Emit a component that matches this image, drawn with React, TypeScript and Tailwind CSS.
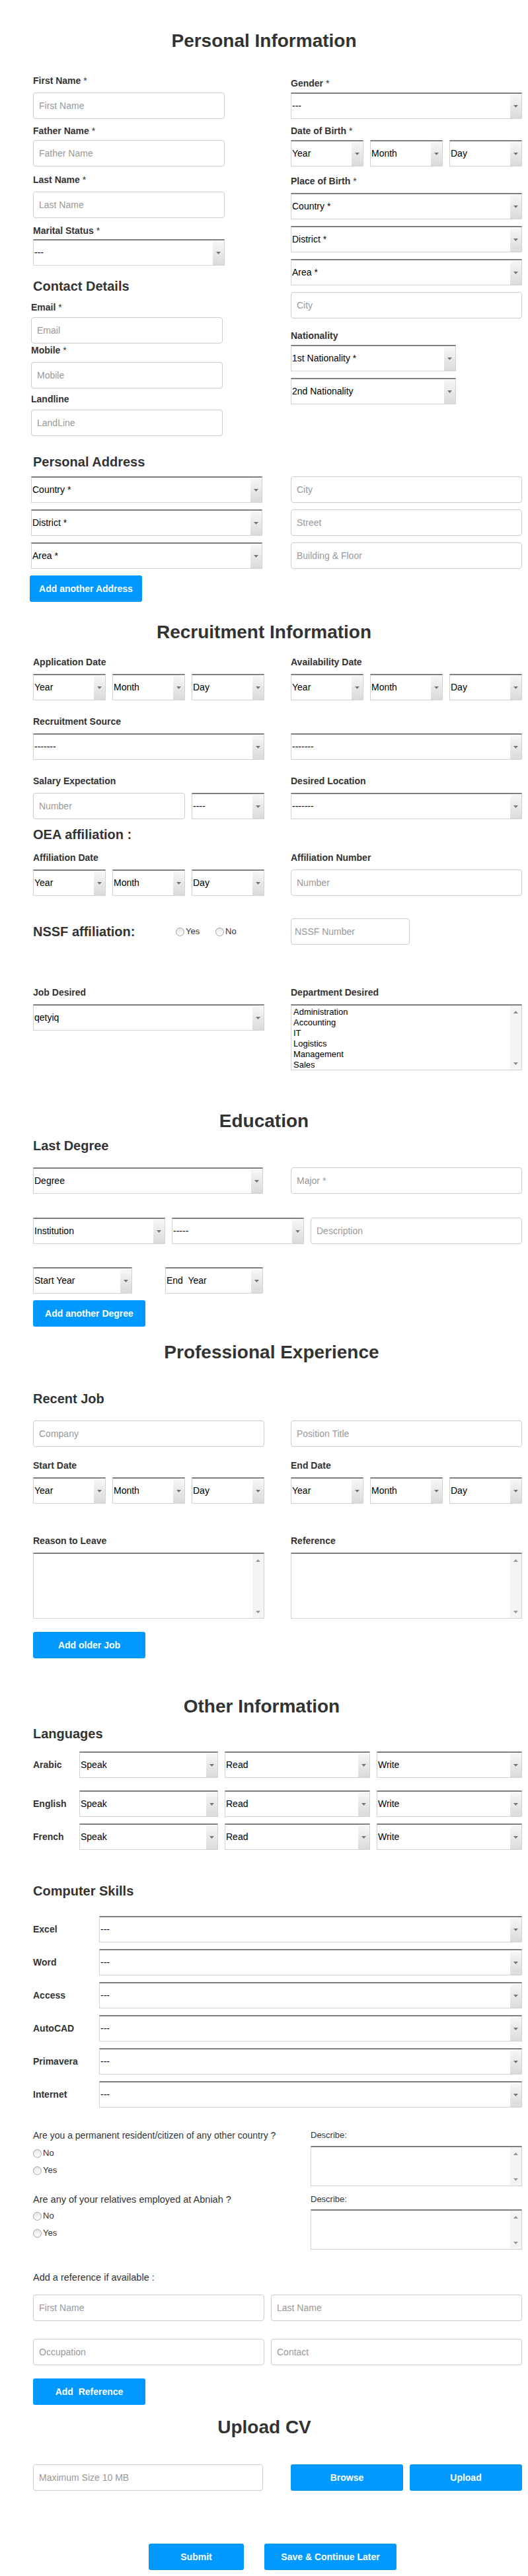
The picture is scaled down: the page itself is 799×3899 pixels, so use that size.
import React from "react";

type C = { className?: string };

function Tri({ up = false, color = "#777" }: { up?: boolean; color?: string }) {
  return (
    <svg width="7" height="4" viewBox="0 0 7 4">
      <path d={up ? "M0 4 L3.5 0 L7 4 Z" : "M0 0 L7 0 L3.5 4 Z"} fill={color} />
    </svg>
  );
}

function Title({ t, className = "" }: { t: string } & C) {
  return (
    <div className={`text-center text-[28px] leading-[32px] font-bold text-[#333] ${className}`}>{t}</div>
  );
}

function H2({ t, className = "" }: { t: string } & C) {
  return <div className={`text-[20px] leading-[24px] font-bold text-[#333] whitespace-nowrap ${className}`}>{t}</div>;
}

function Lbl({ t, req = false, className = "" }: { t: string; req?: boolean } & C) {
  return (
    <div className={`h-[16px] text-[14px] leading-[16px] font-bold text-[#333] whitespace-nowrap ${className}`}>
      {t}
      {req && <span className="font-normal"> *</span>}
    </div>
  );
}

function Inp({ ph, className = "" }: { ph: string } & C) {
  return (
    <input
      readOnly
      placeholder={ph}
      className={`block h-[40px] border border-[#cccccc] rounded-[4px] bg-white px-[8px] text-[14px] text-black placeholder:text-[#999] outline-none ${className}`}
    />
  );
}

function Sel({ v, className = "" }: { v: string } & C) {
  return (
    <div className={`h-[40px] flex bg-white border border-[#d3d3d3] border-t-2 border-t-[#7f7f7f] ${className}`}>
      <div className="flex-1 min-w-0 flex items-center pl-[1px] text-[14px] text-black whitespace-pre overflow-hidden">{v}</div>
      <div className="w-[17px] shrink-0 mt-[1px] bg-linear-to-b from-[#f7f7f7] to-[#dadada] flex items-center justify-center">
        <Tri />
      </div>
    </div>
  );
}

function TA({ className = "" }: C) {
  return (
    <div className={`flex bg-white border border-[#d3d3d3] border-t-2 border-t-[#7f7f7f] ${className}`}>
      <div className="flex-1" />
      <div className="w-[17px] bg-[#f4f4f4] flex flex-col items-center justify-between pt-[8px] pb-[7px]">
        <Tri up color="#999" />
        <Tri color="#999" />
      </div>
    </div>
  );
}

function ListBox() {
  return (
    <div className="h-[100px] flex bg-white border border-[#d3d3d3] border-t-2 border-t-[#7f7f7f]">
      <div className="flex-1 pl-[3px] pt-[2px] text-[13px] leading-[16px] text-black overflow-hidden">
        {["Administration", "Accounting", "IT", "Logistics", "Management", "Sales"].map((x) => (
          <div key={x}>{x}</div>
        ))}
      </div>
      <div className="w-[17px] bg-[#f4f4f4] flex flex-col items-center justify-between pt-[8px] pb-[7px]">
        <Tri up color="#888" />
        <Tri color="#888" />
      </div>
    </div>
  );
}

function Btn({ t, className = "" }: { t: string } & C) {
  return (
    <div
      className={`h-[40px] bg-[#0099ff] rounded-[3px] text-white text-[14px] font-bold flex items-center justify-center whitespace-pre ${className}`}
    >
      {t}
    </div>
  );
}

function Radio({ t, className = "" }: { t: string } & C) {
  return (
    <div className={`h-[16px] flex items-center gap-[2px] text-[13px] leading-[16px] text-[#333] ${className}`}>
      <span className="w-[13px] h-[13px] rounded-full border border-[#a0a0a0] bg-linear-to-b from-[#e8e8e8] to-white" />
      {t}
    </div>
  );
}

function Dates({ className = "" }: C) {
  return (
    <div className={`flex gap-[10px] ${className}`}>
      <Sel v="Year" className="flex-1 min-w-0" />
      <Sel v="Month" className="flex-1 min-w-0" />
      <Sel v="Day" className="flex-1 min-w-0" />
    </div>
  );
}

function Row2({ l, r, className = "" }: { l: React.ReactNode; r: React.ReactNode } & C) {
  return (
    <div className={`flex items-start ${className}`}>
      <div className="w-[350px]">{l}</div>
      <div className="w-[350px] ml-[40px]">{r}</div>
    </div>
  );
}

export default function App() {
  const langs = [
    ["Arabic", "mt-[15px]"],
    ["English", "mt-[19px]"],
    ["French", "mt-[10px]"],
  ];
  const skills = ["Excel", "Word", "Access", "AutoCAD", "Primavera", "Internet"];
  return (
    <div className="w-[799px] bg-white font-['Liberation_Sans',Arial,sans-serif] text-[#333] pb-[9px] overflow-hidden">
      {/* Personal Information */}
      <Title t="Personal Information" className="mt-[46px]" />
      <div className="ml-[50px] flex items-start">
        <div className="w-[290px] flex flex-col">
          <Lbl t="First Name" req className="mt-[36px]" />
          <Inp ph="First Name" className="mt-[10px] w-[290px]" />
          <Lbl t="Father Name" req className="mt-[10px]" />
          <Inp ph="Father Name" className="mt-[6px] w-[290px]" />
          <Lbl t="Last Name" req className="mt-[12px]" />
          <Inp ph="Last Name" className="mt-[10px] w-[290px]" />
          <Lbl t="Marital Status" req className="mt-[11px]" />
          <Sel v="---" className="mt-[5px] w-[290px]" />
          <H2 t="Contact Details" className="mt-[19px]" />
          <Lbl t="Email" req className="mt-[12px] -ml-[3px]" />
          <Inp ph="Email" className="mt-[7px] -ml-[3px] w-[290px]" />
          <Lbl t="Mobile" req className="mt-[2px] -ml-[3px]" />
          <Inp ph="Mobile" className="mt-[10px] -ml-[3px] w-[290px]" />
          <Lbl t="Landline" className="mt-[8px] -ml-[3px]" />
          <Inp ph="LandLine" className="mt-[8px] -ml-[3px] w-[290px]" />
        </div>
        <div className="ml-[100px] w-[350px] flex flex-col">
          <Lbl t="Gender" req className="mt-[40px]" />
          <Sel v="---" className="mt-[6px]" />
          <Lbl t="Date of Birth" req className="mt-[10px]" />
          <Dates className="mt-[6px]" />
          <Lbl t="Place of Birth" req className="mt-[14px]" />
          <Sel v="Country *" className="mt-[10px]" />
          <Sel v="District *" className="mt-[10px]" />
          <Sel v="Area *" className="mt-[10px]" />
          <Inp ph="City" className="mt-[10px] w-[350px]" />
          <Lbl t="Nationality" className="mt-[18px]" />
          <Sel v="1st Nationality *" className="mt-[6px] w-[250px]" />
          <Sel v="2nd Nationality" className="mt-[10px] w-[250px]" />
        </div>
      </div>

      {/* Personal Address */}
      <div className="ml-[50px] w-[740px]">
        <H2 t="Personal Address" className="mt-[27px]" />
        {[
          ["Country *", "City"],
          ["District *", "Street"],
          ["Area *", "Building & Floor"],
        ].map(([s, p]) => (
          <div key={s} className="flex mt-[10px]">
            <Sel v={s} className="w-[350px] -ml-[3px]" />
            <Inp ph={p} className="w-[350px] ml-[43px]" />
          </div>
        ))}
        <Btn t="Add another Address" className="mt-[10px] -ml-[5px] w-[170px]" />
      </div>

      {/* Recruitment Information */}
      <Title t="Recruitment Information" className="mt-[30px]" />
      <div className="ml-[50px] w-[740px]">
        <Row2 className="mt-[21px]" l={<Lbl t="Application Date" />} r={<Lbl t="Availability Date" />} />
        <Row2 className="mt-[10px]" l={<Dates />} r={<Dates />} />
        <Row2 className="mt-[24px]" l={<Lbl t="Recruitment Source" />} r={null} />
        <Row2 className="mt-[10px]" l={<Sel v="-------" />} r={<Sel v="-------" />} />
        <Row2 className="mt-[24px]" l={<Lbl t="Salary Expectation" />} r={<Lbl t="Desired Location" />} />
        <Row2
          className="mt-[10px]"
          l={
            <div className="flex">
              <Inp ph="Number" className="w-[230px]" />
              <Sel v="----" className="ml-[10px] flex-1" />
            </div>
          }
          r={<Sel v="-------" />}
        />
        <H2 t="OEA affiliation :" className="mt-[11px]" />
        <Row2 className="mt-[15px]" l={<Lbl t="Affiliation Date" />} r={<Lbl t="Affiliation Number" />} />
        <Row2 className="mt-[10px]" l={<Dates />} r={<Inp ph="Number" className="w-[350px]" />} />
        <div className="flex items-center mt-[34px] h-[40px]">
          <div className="w-[216px] text-[20px] leading-[24px] font-bold">NSSF affiliation:</div>
          <div className="w-[60px]">
            <Radio t="Yes" />
          </div>
          <div className="w-[114px]">
            <Radio t="No" />
          </div>
          <Inp ph="NSSF Number" className="w-[180px] !px-[5px]" />
        </div>
        <Row2 className="mt-[64px]" l={<Lbl t="Job Desired" />} r={<Lbl t="Department Desired" />} />
        <Row2 className="mt-[10px]" l={<Sel v="qetyiq" />} r={<ListBox />} />
      </div>

      {/* Education */}
      <Title t="Education" className="mt-[61px]" />
      <div className="ml-[50px] w-[740px]">
        <H2 t="Last Degree" className="mt-[9px]" />
        <div className="flex mt-[21px]">
          <Sel v="Degree" className="w-[348px]" />
          <Inp ph="Major *" className="w-[350px] ml-[42px]" />
        </div>
        <div className="flex mt-[36px]">
          <Sel v="Institution" className="w-[200px]" />
          <Sel v="-----" className="w-[200px] ml-[10px]" />
          <Inp ph="Description" className="w-[320px] ml-[10px]" />
        </div>
        <div className="flex mt-[35px]">
          <Sel v="Start Year" className="w-[150px]" />
          <Sel v="End  Year" className="w-[148px] ml-[50px]" />
        </div>
        <Btn t="Add another Degree" className="mt-[10px] w-[170px]" />
      </div>

      {/* Professional Experience */}
      <Title t="Professional Experience" className="mt-[23px] pl-[23px]" />
      <div className="ml-[50px] w-[740px]">
        <H2 t="Recent Job" className="mt-[42px]" />
        <Row2
          className="mt-[21px]"
          l={<Inp ph="Company" className="w-[350px]" />}
          r={<Inp ph="Position Title" className="w-[350px]" />}
        />
        <Row2 className="mt-[20px]" l={<Lbl t="Start Date" />} r={<Lbl t="End Date" />} />
        <Row2 className="mt-[10px]" l={<Dates />} r={<Dates />} />
        <Row2 className="mt-[48px]" l={<Lbl t="Reason to Leave" />} r={<Lbl t="Reference" />} />
        <Row2 className="mt-[10px]" l={<TA className="h-[100px]" />} r={<TA className="h-[100px]" />} />
        <Btn t="Add older Job" className="mt-[20px] w-[170px]" />
      </div>

      {/* Other Information */}
      <Title t="Other Information" className="mt-[57px] pr-[7px]" />
      <div className="ml-[50px] w-[740px]">
        <H2 t="Languages" className="mt-[13px]" />
        {langs.map(([l, m]) => (
          <div key={l} className={`flex items-center ${m}`}>
            <div className="w-[70px] text-[14px] leading-[16px] font-bold">{l}</div>
            <Sel v="Speak" className="w-[210px]" />
            <Sel v="Read" className="w-[220px] ml-[10px]" />
            <Sel v="Write" className="w-[220px] ml-[10px]" />
          </div>
        ))}
        <H2 t="Computer Skills" className="mt-[50px]" />
        {skills.map((s, i) => (
          <div key={s} className={`flex items-center ${i === 0 ? "mt-[26px]" : "mt-[10px]"}`}>
            <div className="w-[100px] text-[14px] leading-[16px] font-bold">{s}</div>
            <Sel v="---" className="w-[640px]" />
          </div>
        ))}

        <div className="flex items-start mt-[34px]">
          <div className="w-[420px]">
            <div className="text-[14px] leading-[16px] text-[#333] whitespace-nowrap">
              Are you a permanent resident/citizen of any other country ?
            </div>
            <Radio t="No" className="mt-[11px]" />
            <Radio t="Yes" className="mt-[10px]" />
          </div>
          <div className="w-[320px]">
            <div className="text-[13px] leading-[16px] text-[#333]">Describe:</div>
            <TA className="mt-[8px] h-[61px]" />
          </div>
        </div>
        <div className="flex items-start mt-[12px]">
          <div className="w-[420px]">
            <div className="text-[14.5px] leading-[16px] text-[#333] whitespace-nowrap">
              Are any of your relatives employed at Abniah ?
            </div>
            <Radio t="No" className="mt-[9px]" />
            <Radio t="Yes" className="mt-[10px]" />
          </div>
          <div className="w-[320px]">
            <div className="text-[13px] leading-[16px] text-[#333]">Describe:</div>
            <TA className="mt-[7px] h-[61px]" />
          </div>
        </div>

        <div className="mt-[34px] text-[14.5px] leading-[16px] text-[#333]">Add a reference if available :</div>
        <div className="flex mt-[18px]">
          <Inp ph="First Name" className="w-[350px]" />
          <Inp ph="Last Name" className="w-[380px] ml-[10px]" />
        </div>
        <div className="flex mt-[27px]">
          <Inp ph="Occupation" className="w-[350px]" />
          <Inp ph="Contact" className="w-[380px] ml-[10px]" />
        </div>
        <Btn t="Add  Reference" className="mt-[20px] w-[170px]" />
      </div>

      {/* Upload CV */}
      <Title t="Upload CV" className="mt-[18px] pl-[1px]" />
      <div className="ml-[50px] w-[740px]">
        <div className="flex mt-[40px]">
          <Inp ph="Maximum Size 10 MB" className="w-[348px]" />
          <Btn t="Browse" className="w-[170px] ml-[42px]" />
          <Btn t="Upload" className="w-[170px] ml-[10px]" />
        </div>
        <div className="flex mt-[80px] ml-[175px]">
          <Btn t="Submit" className="w-[144px]" />
          <Btn t="Save & Continue Later" className="w-[200px] ml-[31px]" />
        </div>
      </div>
    </div>
  );
}
